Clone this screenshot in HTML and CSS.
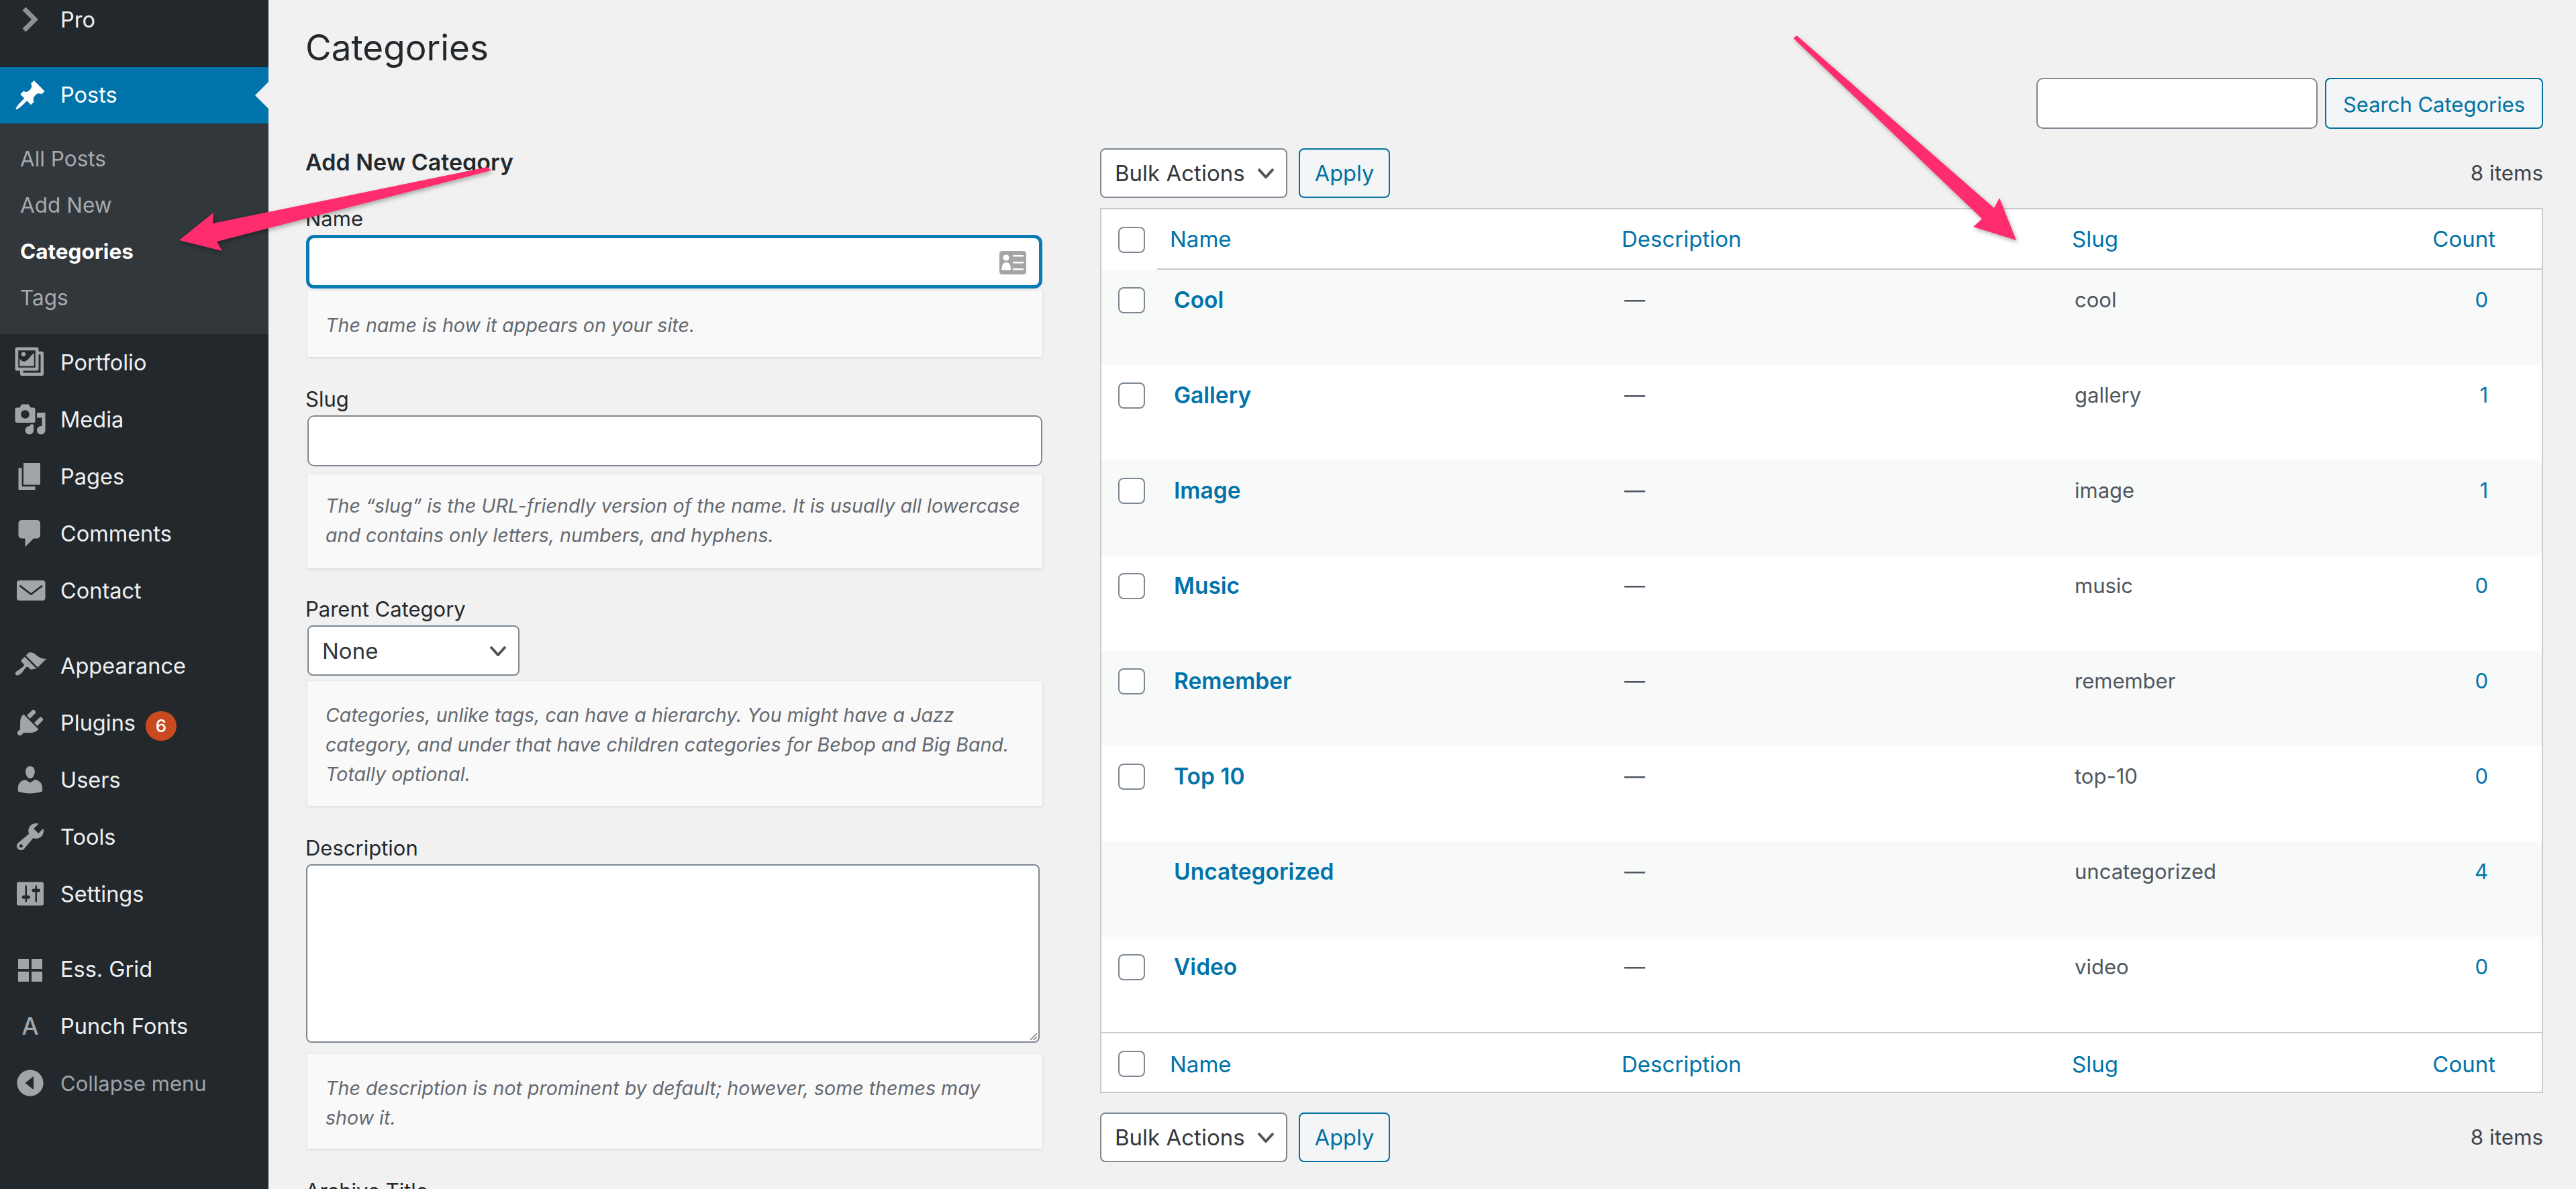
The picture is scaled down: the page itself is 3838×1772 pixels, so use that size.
FILE: index.html
```html
<!DOCTYPE html>
<html lang="en">
<head>
<meta charset="UTF-8" />
<title>Categories</title>
<link rel="stylesheet" href="styles.css">
</head>
<body>

<div class="admin">
  <nav class="sidebar">
    <ul class="menu">
      <li class="menu-item"><svg class="ico ico-chevron" viewBox="0 0 50 50"><path d="M16 9 L32 25 L16 41"/></svg><span>Pro</span></li>
      <li class="menu-sep-sm"></li>
      <li class="menu-item active"><svg class="ico" viewBox="0 0 20 20"><path d="M10.44 3.02l1.82-1.82 6.36 6.35-1.83 1.82c-1.05-.68-2.48-.57-3.41.36l-.75.75c-.92.93-1.04 2.35-.35 3.41l-1.83 1.82-2.41-2.41-2.8 2.79c-.42.42-3.38 2.71-3.8 2.29s1.86-3.39 2.28-3.81l2.79-2.79L4.1 9.36l1.83-1.82c1.05.69 2.48.57 3.4-.36l.75-.75c.93-.92 1.05-2.35.36-3.41z"/></svg><span>Posts</span></li>
      <li class="submenu">
        <a>All Posts</a>
        <a>Add New</a>
        <a class="current">Categories</a>
        <a>Tags</a>
      </li>
      <li class="menu-item"><svg class="ico" viewBox="0 0 20 20"><path fill-rule="evenodd" d="M2 1h12c.6 0 1 .4 1 1v1.500h2c.6 0 1 .4 1 1V17c0 .6-.4 1-1 1H5c-.6 0-1-.4-1-1v-2H2c-.6 0-1-.4-1-1V2c0-.6.4-1 1-1zm.9 1.900v10.200h10.200V2.900H2.900zM15 5.300V14c0 .6-.4 1-1 1H5.800v1.200h10.400V5.300H15zM3.700 12.200V7.800c.9 1.200 1.800 1.800 2.800 1.700 2.200-.3 3.200-3.200 5.800-5.100v7.800H3.700zM6 3.900a1.300 1.300 0 1 1 0 2.600 1.300 1.300 0 0 1 0-2.600z"/></svg><span>Portfolio</span></li>
      <li class="menu-item"><svg class="ico" viewBox="0 0 20 20"><path fill-rule="evenodd" d="M13 11V4c0-.55-.45-1-1-1h-1.670L9 1H5L3.670 3H2c-.55 0-1 .45-1 1v7c0 .55.45 1 1 1h10c.55 0 1-.45 1-1zM7 4.500c1.380 0 2.500 1.120 2.500 2.500S8.380 9.500 7 9.500 4.500 8.380 4.500 7 5.620 4.500 7 4.500zM14 6h5v10.500c0 1.380-1.120 2.500-2.500 2.500S14 17.880 14 16.500s1.120-2.500 2.500-2.500c.17 0 .34.02.5.05V9h-3V6zm-4 8.050V13h2v3.500c0 1.380-1.120 2.500-2.500 2.500S7 17.880 7 16.500 8.120 14 9.500 14c.17 0 .34.02.5.05z"/></svg><span>Media</span></li>
      <li class="menu-item"><svg class="ico" viewBox="0 0 20 20"><path d="M6 15V2h10v13H6zm-1 1h8v2H3V5h2v11z"/></svg><span>Pages</span></li>
      <li class="menu-item"><svg class="ico" viewBox="0 0 20 20"><path d="M5 2h9c1.100 0 2 .9 2 2v7c0 1.100-.9 2-2 2h-2l-5 5v-5H5c-1.100 0-2-.9-2-2V4c0-1.100.9-2 2-2z"/></svg><span>Comments</span></li>
      <li class="menu-item"><svg class="ico" viewBox="0 0 20 20"><path fill-rule="evenodd" d="M19 14.500v-9c0-.83-.67-1.500-1.500-1.500H3.490c-.83 0-1.500.67-1.500 1.500v9c0 .83.67 1.500 1.500 1.500H17.500c.83 0 1.500-.67 1.500-1.500zM16.900 6.700l-6.400 4.900-6.400-4.900-.6.9 7 5.300 7-5.300z"/></svg><span>Contact</span></li>
      <li class="menu-sep"></li>
      <li class="menu-item"><svg class="ico" viewBox="0 0 20 20"><path d="M14.480 11.060L7.410 3.990l1.500-1.500c.5-.56 2.300-.47 3.510.32 1.210.8 1.430 1.280 2.910 2.100 1.180.64 2.450 1.260 4.450.85zm-.71.71L6.700 4.700 4.930 6.470c-.39.39-.39 1.020 0 1.410l1.060 1.060c.39.39.39 1.030 0 1.420-.6.6-1.430 1.110-2.210 1.690-.35.26-.7.53-1.010.84C1.430 13.230.78 14.860 1.400 15.500c.73.74 2.240.1 3.600-1.250.31-.31.58-.66.84-1.010.58-.78 1.090-1.610 1.690-2.210.39-.39 1.020-.39 1.410 0l1.060 1.060c.39.39 1.020.39 1.410 0z"/></svg><span>Appearance</span></li>
      <li class="menu-item"><svg class="ico" viewBox="0 0 20 20"><path d="M13.110 4.360L9.870 7.600 8 5.730l3.240-3.240c.35-.34 1.050-.2 1.560.32.52.51.66 1.210.31 1.550zm-8 1.770l.91-1.120 9.010 9.010-1.190.84c-.71.71-2.630 1.160-3.820 1.160H6.140L4.900 17.260c-.59.59-1.540.59-2.120 0-.59-.58-.59-1.530 0-2.120l1.240-1.240v-3.880c0-1.130.4-3.190 1.090-3.890zm7.260 3.970l3.240-3.240c.34-.35 1.040-.21 1.550.31.52.51.66 1.210.31 1.550l-3.240 3.250z"/></svg><span>Plugins</span><b class="badge">6</b></li>
      <li class="menu-item"><svg class="ico" viewBox="0 0 20 20"><path d="M10 9.250c-2.270 0-2.730-3.440-2.730-3.440C7 4.020 7.820 2 9.970 2c2.160 0 2.980 2.020 2.710 3.810 0 0-.41 3.440-2.680 3.440zm0 2.570L12.720 10c2.390 0 4.520 2.330 4.520 4.530v2.490s-3.650 1.130-7.240 1.130c-3.650 0-7.240-1.130-7.240-1.130v-2.490c0-2.250 1.940-4.480 4.470-4.480z"/></svg><span>Users</span></li>
      <li class="menu-item"><svg class="ico" viewBox="0 0 20 20"><path fill-rule="evenodd" d="M16.680 9.770c-1.340 1.340-3.300 1.670-4.950.99l-5.410 6.520c-.99.99-2.590.99-3.580 0s-.99-2.590 0-3.570l6.520-5.420c-.68-1.650-.35-3.610.99-4.950 1.280-1.280 3.120-1.620 4.720-1.060l-2.890 2.890 2.820 2.820 2.860-2.870c.53 1.580.18 3.390-1.080 4.650zM3.810 16.210c.4.39 1.040.39 1.430 0 .4-.4.4-1.040 0-1.430-.39-.4-1.030-.4-1.430 0-.39.39-.39 1.030 0 1.430z"/></svg><span>Tools</span></li>
      <li class="menu-item"><svg class="ico" viewBox="0 0 20 20"><path fill-rule="evenodd" d="M18 16V4c0-.55-.45-1-1-1H3c-.55 0-1 .45-1 1v12c0 .55.45 1 1 1h14c.55 0 1-.45 1-1zM8 11h1c.55 0 1 .45 1 1s-.45 1-1 1H8v1.500c0 .28-.22.5-.5.5s-.5-.22-.5-.5V13H6c-.55 0-1-.45-1-1s.45-1 1-1h1V5.500c0-.28.22-.5.5-.5s.5.22.5.5V11zm5-2h-1c-.55 0-1-.45-1-1s.45-1 1-1h1V5.500c0-.28.22-.5.5-.5s.5.22.5.5V7h1c.55 0 1 .45 1 1s-.45 1-1 1h-1v5.500c0 .28-.22.5-.5.5s-.5-.22-.5-.5V9z"/></svg><span>Settings</span></li>
      <li class="menu-sep"></li>
      <li class="menu-item"><svg class="ico" viewBox="0 0 20 20"><path d="M2.800 4h6.400v6H2.800zM10.800 4h6.400v6h-6.400zM2.800 11.600h6.400v6H2.800zM10.800 11.600h6.400v6h-6.400z"/></svg><span>Ess. Grid</span></li>
      <li class="menu-item"><i class="ico ico-letter">A</i><span>Punch Fonts</span></li>
      <li class="menu-item collapse"><svg class="ico" viewBox="0 0 20 20"><path fill-rule="evenodd" d="M10 2.160c4.330 0 7.840 3.510 7.840 7.840s-3.510 7.840-7.840 7.840S2.160 14.330 2.160 10 5.670 2.160 10 2.160zM12 14V6l-5 4z"/></svg><span>Collapse menu</span></li>
    </ul>
  </nav>

  <main class="content">
    <section class="col-form">
      <h1 class="page-title">Categories</h1>
      <h2 class="form-title">Add New Category</h2>

      <div class="field field-name">
        <label>Name</label>
        <div class="input focused">
          <svg class="contact-ico" viewBox="0 0 40 35"><path fill-rule="evenodd" d="M4 0h32c2.200 0 4 1.800 4 4v27c0 2.200-1.800 4-4 4H4c-2.200 0-4-1.800-4-4V4c0-2.200 1.800-4 4-4zM20 6v2.500h16V6H20zm0 10v2.500h16V16H20zm0 10v2.500h16V26H20zM10 5.500a4.500 4.500 0 1 0 0 9 4.500 4.500 0 0 0 0-9zM3.500 28.500H17c0-7.500-2-11.500-6.700-11.500S3.500 21 3.500 28.500z"/></svg>
        </div>
        <p class="hint">The name is how it appears on your site.</p>
      </div>

      <div class="field field-slug">
        <label>Slug</label>
        <div class="input"></div>
        <p class="hint">The “slug” is the URL-friendly version of the name. It is usually all lowercase and contains only letters, numbers, and hyphens.</p>
      </div>

      <div class="field field-parent">
        <label>Parent Category</label>
        <div class="select select-parent">None<svg class="caret" viewBox="0 0 24 16"><path d="M1 2l11 12 11-12"/></svg></div>
        <p class="hint">Categories, unlike tags, can have a hierarchy. You might have a Jazz category, and under that have children categories for Bebop and Big Band. Totally optional.</p>
      </div>

      <div class="field field-desc">
        <label>Description</label>
        <div class="textarea"><svg class="grip" viewBox="0 0 14 14"><path d="M13 3L3 13M13 8l-5 5"/></svg></div>
        <p class="hint">The description is not prominent by default; however, some themes may show it.</p>
      </div>

      <div class="field">
        <label>Archive Title</label>
      </div>
    </section>

    <section class="col-list">
      <div class="search-row">
        <div class="input search-input"></div>
        <button class="btn search-btn">Search Categories</button>
      </div>
      <div class="tablenav nav-top">
        <div class="select select-bulk">Bulk Actions<svg class="caret" viewBox="0 0 24 16"><path d="M1 2l11 12 11-12"/></svg></div>
        <button class="btn apply-btn">Apply</button>
        <span class="count-label">8 items</span>
      </div>

      <table class="list">
        <thead>
          <tr>
            <th class="c-cb"><i class="check"></i></th>
            <th class="c-name">Name</th>
            <th class="c-desc">Description</th>
            <th class="c-slug">Slug</th>
            <th class="c-count">Count</th>
          </tr>
        </thead>
        <tbody>
          <tr><td class="c-cb"><i class="check"></i></td><td class="c-name">Cool</td><td class="c-desc">—</td><td class="c-slug">cool</td><td class="c-count">0</td></tr>
          <tr><td class="c-cb"><i class="check"></i></td><td class="c-name">Gallery</td><td class="c-desc">—</td><td class="c-slug">gallery</td><td class="c-count">1</td></tr>
          <tr><td class="c-cb"><i class="check"></i></td><td class="c-name">Image</td><td class="c-desc">—</td><td class="c-slug">image</td><td class="c-count">1</td></tr>
          <tr><td class="c-cb"><i class="check"></i></td><td class="c-name">Music</td><td class="c-desc">—</td><td class="c-slug">music</td><td class="c-count">0</td></tr>
          <tr><td class="c-cb"><i class="check"></i></td><td class="c-name">Remember</td><td class="c-desc">—</td><td class="c-slug">remember</td><td class="c-count">0</td></tr>
          <tr><td class="c-cb"><i class="check"></i></td><td class="c-name">Top 10</td><td class="c-desc">—</td><td class="c-slug">top-10</td><td class="c-count">0</td></tr>
          <tr><td class="c-cb"></td><td class="c-name">Uncategorized</td><td class="c-desc">—</td><td class="c-slug">uncategorized</td><td class="c-count">4</td></tr>
          <tr><td class="c-cb"><i class="check"></i></td><td class="c-name">Video</td><td class="c-desc">—</td><td class="c-slug">video</td><td class="c-count">0</td></tr>
        </tbody>
        <tfoot>
          <tr>
            <th class="c-cb"><i class="check"></i></th>
            <th class="c-name">Name</th>
            <th class="c-desc">Description</th>
            <th class="c-slug">Slug</th>
            <th class="c-count">Count</th>
          </tr>
        </tfoot>
      </table>

      <div class="tablenav nav-bottom">
        <div class="select select-bulk">Bulk Actions<svg class="caret" viewBox="0 0 24 16"><path d="M1 2l11 12 11-12"/></svg></div>
        <button class="btn apply-btn">Apply</button>
        <span class="count-label">8 items</span>
      </div>
    </section>
  </main>
</div>

<!-- annotation arrows drawn over the screenshot -->
<svg class="arrows" viewBox="0 0 3838 1772">
  <polygon points="726,249 732,254 323,360 331,374 267,358 318,317 317,333"/>
  <polygon points="2672,57 2677,53 2971,310 2979,295 3004,358 2940,338 2953,326"/>
</svg>

</body>
</html>
```

FILE: styles.css
```css
* {
  box-sizing: border-box;
}
html, body {
  margin: 0;
  height: 100%;
  overflow: hidden;
}
body {
  font-family: Inter, "Liberation Sans", sans-serif;
  font-size: 33px;
  color: #2c3338;
  background: #f1f1f1;
  position: relative;
}
.admin {
  display: flex;
  height: 1772px;
  overflow: hidden;
}

/* sidebar */
.sidebar {
  width: 400px;
  flex: none;
  background: #23282d;
  color: #eef0f1;
  font-size: 32.5px;
}
.menu {
  list-style: none;
  margin: -13px 0 0;
  padding: 0;
}
.menu-item {
  position: relative;
  display: flex;
  align-items: center;
  height: 85px;
  padding-left: 90px;
}
.menu-item span {
  margin-top: -1px;
}
.menu-sep-sm {
  height: 28px;
}
.menu-sep {
  height: 27px;
}
.ico {
  position: absolute;
  left: 20px;
  top: 17px;
  width: 50px;
  height: 50px;
  fill: #a0a5aa;
}
.ico-chevron {
  fill: none;
  stroke: #8d9196;
  stroke-width: 7;
}
.ico-letter {
  font-style: normal;
  font-size: 36px;
  font-weight: 500;
  line-height: 50px;
  text-align: center;
  color: #a0a5aa;
}
.menu-item.active {
  height: 84px;
  background: #0073aa;
  color: #fff;
}
.menu-item.active .ico {
  fill: #fff;
}
.menu-item.active::after {
  content: "";
  position: absolute;
  right: 0;
  top: 22px;
  border: 20px solid transparent;
  border-right-color: #f1f1f1;
  border-left-width: 0;
}
.submenu {
  display: flex;
  flex-direction: column;
  height: 314px;
  padding: 18px 0 20px 30px;
  background: #32373c;
  color: #a7aaad;
  font-size: 31.5px;
}
.submenu a {
  height: 69px;
  line-height: 69px;
}
.submenu .current {
  color: #fff;
  font-weight: 700;
}
.badge {
  display: inline-block;
  width: 46px;
  height: 44px;
  margin: 8px 0 0 15px;
  border-radius: 22px;
  background: #ca4a1f;
  color: #fff;
  font-size: 26px;
  font-weight: 500;
  line-height: 44px;
  text-align: center;
}
.collapse {
  color: #a0a5aa;
  font-size: 31px;
}

/* content */
.content {
  flex: 1;
  min-width: 0;
  display: flex;
  padding: 0 49px 0 55px;
}
.col-form {
  width: 1098px;
  flex: none;
  padding-top: 36px;
}
.col-list {
  flex: 1;
  min-width: 0;
  margin-left: 86px;
  padding-top: 116px;
}
.page-title {
  margin: 0 0 112px;
  font-size: 53px;
  font-weight: 400;
  line-height: 70px;
  color: #23282d;
}

/* form column */
.form-title {
  margin: 0 0 36px;
  font-size: 34px;
  font-weight: 600;
  line-height: 48px;
  color: #23282d;
}
.field {
  margin-bottom: 39px;
}
.field-slug {
  margin-bottom: 37px;
}
.field label {
  display: block;
  height: 48px;
  font-size: 31px;
  line-height: 48px;
  color: #23282d;
}
.input {
  position: relative;
  height: 76px;
  background: #fff;
  border: 2.5px solid #7e8993;
  border-radius: 10px;
}
.field-slug .input {
  margin-left: 3px;
}
.input.focused {
  height: 80px;
  margin-left: 1px;
  border: 5px solid #0a7ab3;
  border-radius: 12px;
}
.contact-ico {
  position: absolute;
  right: 19px;
  top: 19px;
  width: 40px;
  height: 35px;
  fill: #a5a5a5;
}
.hint {
  margin: 4px 0 0 3px;
  padding: 29px 30px 25px 27px;
  background: #f9f9f9;
  box-shadow: 0 1px 4px rgba(0, 0, 0, 0.13);
  font-size: 28.6px;
  font-style: italic;
  line-height: 44px;
  color: #646970;
}
.field-slug .hint {
  margin-top: 12px;
  padding: 25px 30px 27px 27px;
}
.field-parent .hint {
  margin-top: 8px;
}
.field-desc .hint {
  margin-top: 17px;
  padding-bottom: 24px;
}
.select {
  position: relative;
  display: flex;
  align-items: center;
  background: #fff;
  border: 2.5px solid #7e8993;
  border-radius: 8px;
  padding-left: 20px;
  color: #32373c;
}
.caret {
  position: absolute;
  right: 16px;
  top: 50%;
  width: 28px;
  height: 16px;
  margin-top: -8px;
  fill: none;
  stroke: #555;
  stroke-width: 4;
}
.select-parent {
  width: 316px;
  height: 75px;
  margin-left: 3px;
}
.textarea {
  position: relative;
  width: 1093px;
  height: 266px;
  margin-left: 1px;
  background: #fff;
  border: 2.5px solid #7e8993;
  border-radius: 8px;
}
.grip {
  position: absolute;
  right: 1px;
  bottom: 1px;
  width: 14px;
  height: 14px;
  fill: none;
  stroke: #777;
  stroke-width: 1.500;
}

/* list column */
.search-row {
  display: flex;
  justify-content: flex-end;
  gap: 11px;
  height: 76px;
}
.search-input {
  width: 419px;
}
.btn {
  height: 100%;
  padding: 0;
  background: #f3f5f6;
  border: 2.5px solid #0071a1;
  border-radius: 8px;
  font-family: inherit;
  font-size: 32.5px;
  color: #0071a1;
}
.search-btn {
  width: 325px;
  padding-top: 2px;
  font-size: 31px;
}
.tablenav {
  display: flex;
  align-items: center;
  gap: 17px;
  height: 74px;
}
.nav-top {
  margin: 29px 0 15px;
}
.nav-bottom {
  margin-top: 29px;
}
.select-bulk {
  width: 279px;
  height: 100%;
}
.apply-btn {
  width: 136px;
}
.count-label {
  margin-left: auto;
  font-size: 31.4px;
  color: #3c434a;
}
.list {
  width: 100%;
  border-collapse: separate;
  border-spacing: 0;
  table-layout: fixed;
  background: #fff;
  border: 2.5px solid #c8cace;
}
.list th, .list td {
  padding: 0;
  text-align: left;
  font-weight: 400;
}
.list th {
  height: 90px;
  color: #0073aa;
}
.list thead th:not(.c-cb) {
  border-bottom: 2.5px solid #c8cace;
}
.list tfoot th {
  height: 89px;
  padding-top: 4px;
  border-top: 2.5px solid #c8cace;
}
.list td {
  height: 142px;
  padding-top: 25px;
  vertical-align: top;
  line-height: 40px;
  font-size: 31px;
  color: #50575e;
}
.list tbody tr:nth-child(odd) td {
  background: #f8f9f9;
}
.c-cb {
  width: 83px;
  padding-left: 25px !important;
}
.list td.c-cb {
  padding-top: 26px;
}
.check {
  display: block;
  width: 40px;
  height: 39px;
  background: #fff;
  border: 2.5px solid #7e8993;
  border-radius: 8px;
}
.c-name {
  width: 671px;
}
.list th.c-name {
  padding-left: 19px;
}
.list th.c-desc {
  padding-left: 21px;
}
.list th.c-slug {
  padding-left: 19px;
}
.list td.c-name, .list td.c-desc {
  padding-left: 25px;
}
.list td.c-slug {
  padding-left: 23px;
}
.list td.c-name {
  font-size: 33.5px;
  font-weight: 600;
  color: #0073aa;
}
.c-desc {
  width: 673px;
}
.c-slug {
  width: 432px;
}
.list th.c-count {
  text-align: right;
  padding-right: 69px;
}
.list td.c-count {
  text-align: right;
  padding-right: 80px;
  color: #0073aa;
}

/* annotation arrows */
.arrows {
  position: absolute;
  left: 0;
  top: 0;
  width: 3838px;
  height: 1772px;
  pointer-events: none;
  fill: #ff2d6e;
  filter: drop-shadow(2px 3px 3px rgba(0, 0, 0, 0.3));
}
```
